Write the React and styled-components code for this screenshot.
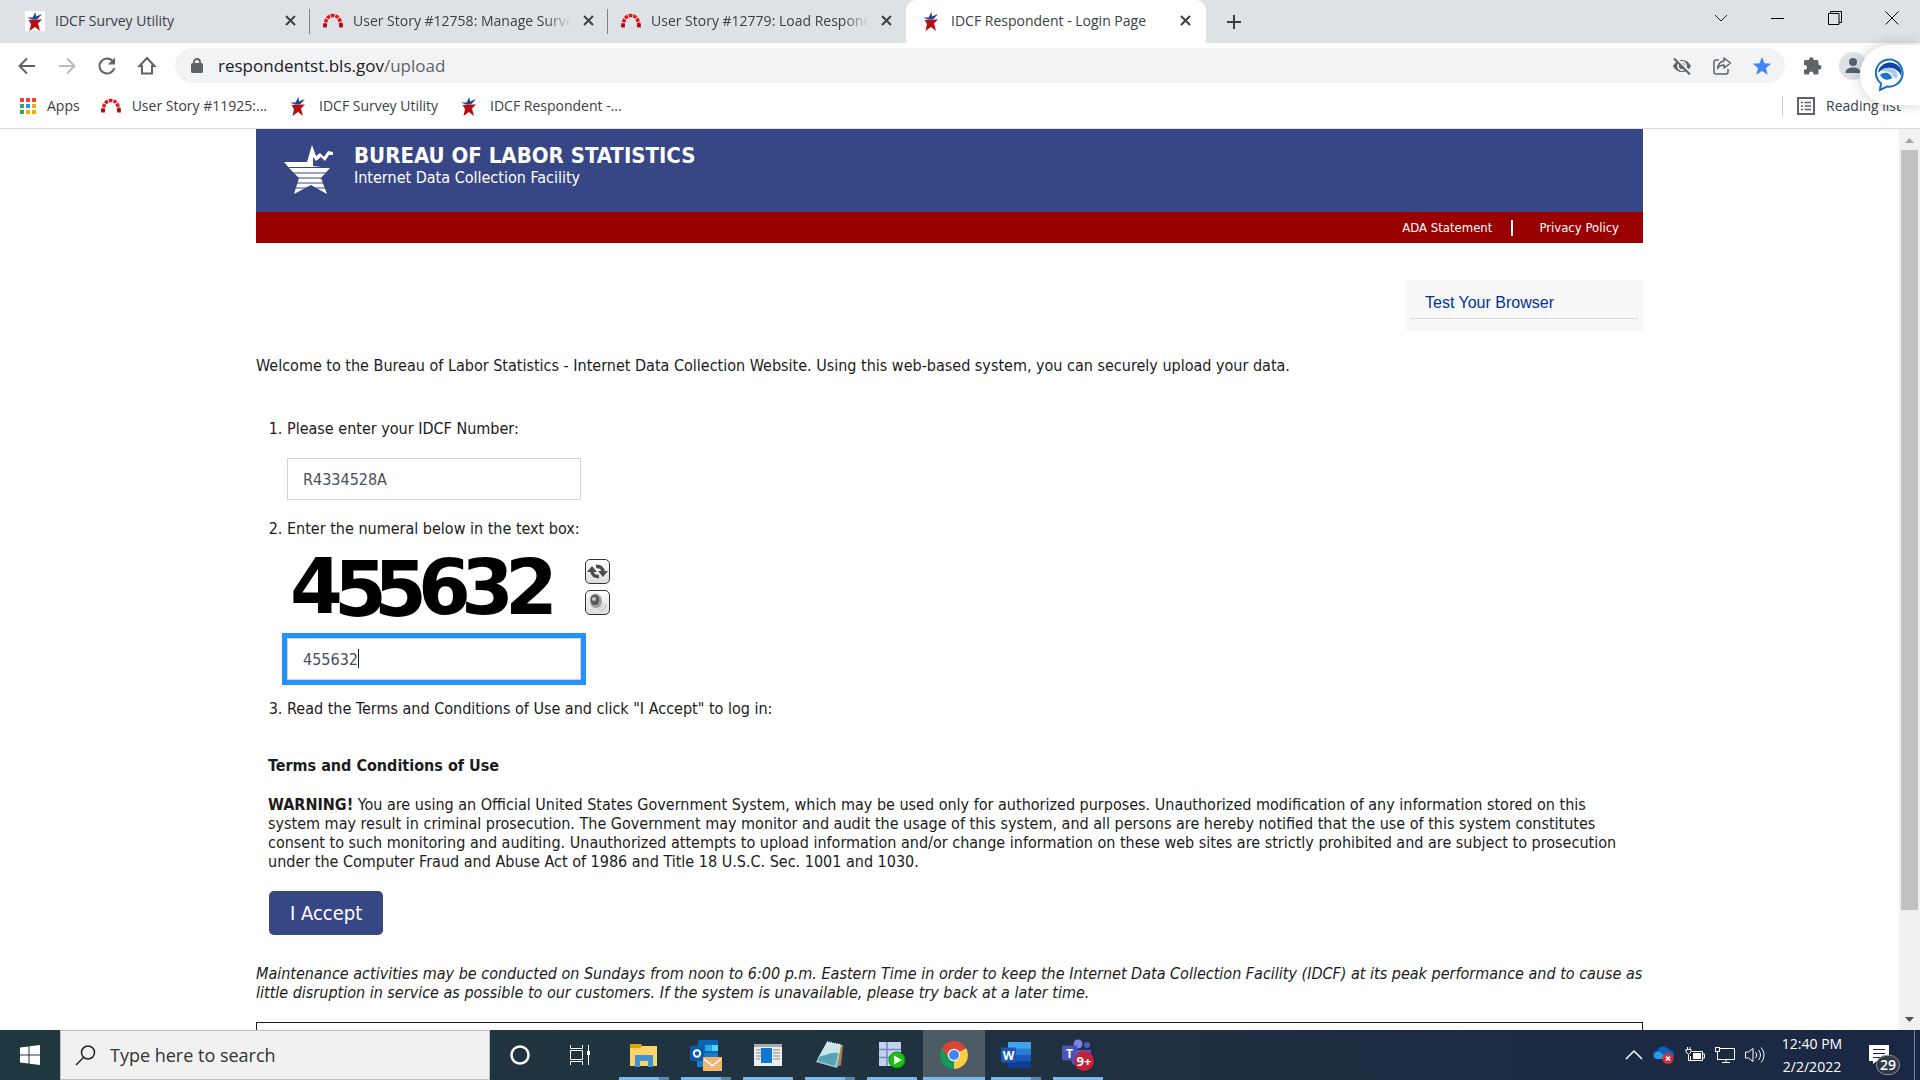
import React from 'react';
import styled, { createGlobalStyle } from 'styled-components';

const uiFont = `'Open Sans', 'Noto Sans', sans-serif`;
const pageFont = `'DejaVu Sans Condensed', 'Noto Sans', sans-serif`;

const tabs = [
  { title: 'IDCF Survey Utility', icon: 'star' },
  { title: 'User Story #12758: Manage Survey Data', icon: 'arch' },
  { title: 'User Story #12779: Load Respondent File', icon: 'arch' },
  { title: 'IDCF Respondent - Login Page', icon: 'star', active: true },
];

const bookmarks = [
  { title: 'Apps', icon: 'apps' },
  { title: 'User Story #11925:...', icon: 'arch' },
  { title: 'IDCF Survey Utility', icon: 'star' },
  { title: 'IDCF Respondent -...', icon: 'star' },
];

export default function App() {
  return (
    <Screen>
      <GlobalStyle />
      <Browser>
        <TabStrip />
        <Toolbar />
        <BookmarkBar />
        <Viewport>
          <LoginPage />
          <ScrollBar />
        </Viewport>
        <Assistant aria-label='Assistant'>
          <AssistantIcon />
        </Assistant>
      </Browser>
      <Taskbar />
    </Screen>
  );
}

/* ---------- browser chrome ---------- */

const TabStrip = () => (
  <Strip>
    {tabs.map((tab, i) => (
      <Tab key={tab.title} $active={tab.active} $divider={i < 2}>
        <SiteIcon name={tab.icon} />
        <TabTitle $fade={tab.icon === 'arch'}>{tab.title}</TabTitle>
        <TabClose aria-label='Close tab'>
          <svg width='11' height='11' viewBox='0 0 11 11' stroke='#3c4043' strokeWidth='2'>
            <path d='M1 1l9 9M10 1l-9 9' />
          </svg>
        </TabClose>
      </Tab>
    ))}
    <NewTab aria-label='New tab'>
      <svg width='16' height='16' viewBox='0 0 16 16' stroke='#3c4043' strokeWidth='2'>
        <path d='M8 1v14M1 8h14' />
      </svg>
    </NewTab>
    <WindowButtons>
      <WindowButton aria-label='Search tabs'>
        <svg width='14' height='14' viewBox='0 0 14 14' fill='none' stroke='#222'>
          <path d='M1 4l6 6 6-6' />
        </svg>
      </WindowButton>
      <WindowButton aria-label='Minimize'>
        <svg width='13' height='13' viewBox='0 0 13 13' stroke='#000'>
          <path d='M0 6.500h13' />
        </svg>
      </WindowButton>
      <WindowButton aria-label='Restore'>
        <svg width='14' height='14' viewBox='0 0 14 14' fill='none' stroke='#000'>
          <path d='M.5 2.500h10.500v11H.5zM2.500 2.500v-2h11v11H11' />
        </svg>
      </WindowButton>
      <WindowButton aria-label='Close'>
        <svg width='14' height='14' viewBox='0 0 14 14' stroke='#000'>
          <path d='M.5.5l13 13M13.500.5l-13 13' />
        </svg>
      </WindowButton>
    </WindowButtons>
  </Strip>
);

const Toolbar = () => (
  <Bar>
    <NavButton aria-label='Back'>
      <svg width='20' height='20' viewBox='0 0 20 20' fill='none' stroke='#5f6368' strokeWidth='2'>
        <path d='M18 10H3M10 2.500L2.500 10l7.500 7.500' />
      </svg>
    </NavButton>
    <NavButton aria-label='Forward'>
      <svg width='20' height='20' viewBox='0 0 20 20' fill='none' stroke='#babcbe' strokeWidth='2'>
        <path d='M2 10h15M10 2.500l7.500 7.500-7.500 7.500' />
      </svg>
    </NavButton>
    <NavButton aria-label='Reload'>
      <svg width='20' height='20' viewBox='0 0 20 20' fill='none' stroke='#5f6368' strokeWidth='2'>
        <path d='M16 5.500A7.500 7.500 0 1 0 17.300 12' />
        <path d='M18 1.500v7h-7z' fill='#5f6368' stroke='none' />
      </svg>
    </NavButton>
    <NavButton aria-label='Home'>
      <svg width='20' height='20' viewBox='0 0 20 20' fill='none' stroke='#5f6368' strokeWidth='2'>
        <path d='M2.500 10L10 2l7.500 8H15v7.500H5V10z' />
      </svg>
    </NavButton>
    <Omnibox>
      <svg width='12' height='16' viewBox='0 0 12 16'>
        <rect x='0' y='5' width='12' height='10' rx='1.500' fill='#5f6368' />
        <path d='M3 6V4a3 3 0 0 1 6 0v2' fill='none' stroke='#5f6368' strokeWidth='1.800' />
      </svg>
      <Url>
        respondentst.bls.gov<span>/upload</span>
      </Url>
      <OmniIcons>
        <svg width='20' height='20' viewBox='0 0 20 20'>
          <path d='M1 10c2-4 5.500-6 9-6s7 2 9 6c-2 4-5.500 6-9 6s-7-2-9-6z' fill='#5f6368' />
          <circle cx='10' cy='10' r='4' fill='#5f6368' stroke='#f1f3f4' strokeWidth='1.800' />
          <path d='M3 1l16 16' stroke='#f1f3f4' strokeWidth='2' />
          <path d='M2 2.500l16 16' stroke='#5f6368' strokeWidth='2' />
        </svg>
        <svg width='20' height='20' viewBox='0 0 20 20' fill='none' stroke='#5f6368' strokeWidth='1.500'>
          <path d='M7 4H4a2 2 0 0 0-2 2v10a2 2 0 0 0 2 2h10a2 2 0 0 0 2-2v-3' />
          <path d='M12 2l6.500 5-6.500 5V9c-3.500 0-5 1-6.500 3.500C6 8.500 8 5.500 12 5z' strokeLinejoin='round' />
        </svg>
        <svg width='20' height='20' viewBox='0 0 20 20'>
          <path d='M10 1l2.500 6.300 6.700.5-5.200 4.300 1.700 6.600L10 15.100l-5.700 3.600L6 12.100.8 7.800l6.700-.5z' fill='#4285f4' />
        </svg>
      </OmniIcons>
    </Omnibox>
    <ExtensionIcons>
      <svg width='20' height='20' viewBox='0 0 20 20' fill='#5f6368'>
        <path d='M7 3.500a2.300 2.300 0 0 1 4.600 0V4H15a1.500 1.500 0 0 1 1.500 1.500V9h.7a2.300 2.300 0 0 1 0 4.600h-.7V17a1.500 1.500 0 0 1-1.500 1.500h-3.500v-.7a2.200 2.200 0 0 0-4.400 0v.7H3.500A1.500 1.500 0 0 1 2 17v-3.300h.7a2.300 2.300 0 0 0 0-4.600H2V5.500A1.500 1.500 0 0 1 3.500 4H7z' />
      </svg>
      <svg width='28' height='28' viewBox='0 0 28 28'>
        <circle cx='14' cy='14' r='14' fill='#dee1e6' />
        <circle cx='14' cy='10' r='4' fill='#566070' />
        <path d='M6.500 21c0-4 3.500-5.500 7.500-5.500s7.500 1.500 7.500 5.500z' fill='#566070' />
      </svg>
    </ExtensionIcons>
  </Bar>
);

const BookmarkBar = () => (
  <Bookmarks>
    {bookmarks.map((item) => (
      <Bookmark href='#' key={item.title}>
        <SiteIcon name={item.icon} />
        {item.title}
      </Bookmark>
    ))}
    <ReadingList>
      <svg width='18' height='18' viewBox='0 0 18 18' stroke='#5f6368' fill='none'>
        <rect x='1' y='1' width='16' height='16' strokeWidth='2' />
        <path d='M4 5.500h2M4 9h2M4 12.500h2M7.500 5.500H14M7.500 9H14M7.500 12.500H14' strokeWidth='1.500' />
      </svg>
      Reading list
    </ReadingList>
  </Bookmarks>
);

const ScrollBar = () => (
  <Scroll>
    <svg width='9' height='5' viewBox='0 0 9 5'>
      <path d='M0 5l4.500-5L9 5z' fill='#a3a3a3' />
    </svg>
    <Thumb />
    <svg width='9' height='5' viewBox='0 0 9 5'>
      <path d='M0 0l4.500 5L9 0z' fill='#505050' />
    </svg>
  </Scroll>
);

/* ---------- page ---------- */

const LoginPage = () => (
  <Page>
    <Header>
      <AgencyLogo />
      <div>
        <h1>BUREAU OF LABOR STATISTICS</h1>
        <p>Internet Data Collection Facility</p>
      </div>
    </Header>
    <LinkBar>
      <a href='#'>ADA Statement</a>
      <i />
      <a href='#'>Privacy Policy</a>
    </LinkBar>
    <SideBox>
      <a href='#'>Test Your Browser</a>
    </SideBox>
    <Welcome>
      Welcome to the Bureau of Labor Statistics - Internet Data Collection Website. Using this
      web-based system, you can securely upload your data.
    </Welcome>
    <Steps>
      <li>
        <label htmlFor='idcf'>Please enter your IDCF Number:</label>
        <Field>
          <TextBox id='idcf' defaultValue='R4334528A' />
        </Field>
      </li>
      <li>
        <label htmlFor='numeral'>Enter the numeral below in the text box:</label>
        <CaptchaRow>
          <Captcha />
          <CaptchaButtons>
            <CaptchaButton aria-label='New numeral'>
              <svg width='21' height='19' viewBox='0 0 21 19' fill='none' stroke='#4d4d4d' strokeWidth='3.500'>
                <path d='M5 9c0 4 3 6 7 5.500M9 4.500c4-.5 7 1.500 7 5.500' />
                <path d='M0 10l5-6 5 6zM11 9h10l-5 6z' fill='#4d4d4d' stroke='none' />
              </svg>
            </CaptchaButton>
            <CaptchaButton aria-label='Play audio'>
              <svg width='21' height='21' viewBox='0 0 21 21' fill='none'>
                <ellipse cx='9' cy='9' rx='6' ry='7' fill='#999' />
                <ellipse cx='8' cy='8' rx='5' ry='6' fill='#5c5c5c' stroke='#bbb' />
                <circle cx='7' cy='7' r='2' fill='#ccc' />
                <path d='M12 17c2-1 4-3 4.500-5.500M14 19c3-1 4.500-3.500 5-6.500' stroke='#b5b5b5' />
              </svg>
            </CaptchaButton>
          </CaptchaButtons>
        </CaptchaRow>
        <Field>
          <TextBox id='numeral' defaultValue='455632' $active />
          <Caret />
        </Field>
      </li>
      <li>Read the Terms and Conditions of Use and click "I Accept" to log in:</li>
    </Steps>
    <Terms>
      <h2>Terms and Conditions of Use</h2>
      <p>
        <b>WARNING!</b> You are using an Official United States Government System, which may be
        used only for authorized purposes. Unauthorized modification of any information stored on
        this system may result in criminal prosecution. The Government may monitor and audit the
        usage of this system, and all persons are hereby notified that the use of this system
        constitutes consent to such monitoring and auditing. Unauthorized attempts to upload
        information and/or change information on these web sites are strictly prohibited and are
        subject to prosecution under the Computer Fraud and Abuse Act of 1986 and Title 18 U.S.C.
        Sec. 1001 and 1030.
      </p>
      <AcceptButton>I Accept</AcceptButton>
    </Terms>
    <Maintenance>
      Maintenance activities may be conducted on Sundays from noon to 6:00 p.m. Eastern Time in
      order to keep the Internet Data Collection Facility (IDCF) at its peak performance and to
      cause as little disruption in service as possible to our customers. If the system is
      unavailable, please try back at a later time.
    </Maintenance>
    <NoticeBox />
  </Page>
);

const Captcha = () => (
  <svg width='294' height='63' viewBox='0 0 294 63' role='img' aria-label='Numeral'>
    <text
      x='3 47 87 131 174 218'
      y='57 60 60 58 58 58'
      fontFamily="'DejaVu Sans', sans-serif"
      fontWeight='700'
      fontSize='76'
    >
      455632
    </text>
  </svg>
);

/* ---------- taskbar ---------- */

const Taskbar = () => (
  <Task>
    <StartButton aria-label='Start'>
      <svg width='20' height='20' viewBox='0 0 20 20' fill='#fff'>
        <path d='M0 2.500L8.500 1.500v8H0zM9.500 1.300L20 0v9.500H9.500zM0 10.500h8.500v8L0 17.500zM9.500 10.500H20V20L9.500 18.700z' />
      </svg>
    </StartButton>
    <SearchBox>
      <svg width='21' height='21' viewBox='0 0 21 21' fill='none' stroke='#222' strokeWidth='1.500'>
        <circle cx='13' cy='7.500' r='6.500' />
        <path d='M8.500 12.500L1 20' />
      </svg>
      <input placeholder='Type here to search' aria-label='Search' />
    </SearchBox>
    <ShellButton aria-label='Cortana'>
      <svg width='20' height='20' viewBox='0 0 20 20'>
        <circle cx='10' cy='10' r='8.500' fill='none' stroke='#fff' strokeWidth='2.500' />
      </svg>
    </ShellButton>
    <ShellButton aria-label='Task view'>
      <svg width='20' height='20' viewBox='0 0 20 20' fill='none' stroke='#fff'>
        <path d='M.5 5.500h12v9H.5zM.5 0v3.500h12V0M.5 20v-3.500h12V20M18.500 0v20' />
        <rect x='17' y='6' width='3' height='4' fill='#fff' stroke='none' />
      </svg>
    </ShellButton>
    <TaskApps>
      <TaskApp aria-label='File Explorer' $stacked>
        <ExplorerIcon />
      </TaskApp>
      <TaskApp aria-label='Outlook' $stacked>
        <OutlookIcon />
      </TaskApp>
      <TaskApp aria-label='Viewer'>
        <WindowIcon />
      </TaskApp>
      <TaskApp aria-label='Notepad' $stacked>
        <NotepadIcon />
      </TaskApp>
      <TaskApp aria-label='Server Manager'>
        <ServerIcon />
      </TaskApp>
      <TaskApp aria-label='Chrome' $active>
        <ChromeIcon />
      </TaskApp>
      <TaskApp aria-label='Word' $stacked>
        <WordIcon />
      </TaskApp>
      <TaskApp aria-label='Teams'>
        <TeamsIcon />
      </TaskApp>
    </TaskApps>
    <Tray>
      <svg width='18' height='12' viewBox='0 0 18 12' fill='none' stroke='#fff' strokeWidth='1.500'>
        <path d='M1 10l8-8 8 8' />
      </svg>
      <svg width='22' height='20' viewBox='0 0 22 20'>
        <path d='M4 14a4 4 0 0 1 0-8 6.500 6.500 0 0 1 12-1 4.500 4.500 0 0 1 1 9z' fill='#0a64b8' />
        <path d='M1 10c1-3 4-4 6-3l9 7H4a4 4 0 0 1-3-4z' fill='#2a9be8' />
        <circle cx='15' cy='13.500' r='5.500' fill='#d7303a' />
        <path d='M13 11.500l4 4M17 11.500l-4 4' stroke='#fff' strokeWidth='1.500' />
      </svg>
      <svg width='20' height='16' viewBox='0 0 20 16' fill='none' stroke='#fff'>
        <path d='M6.500 4.500h11v9h-12V9M18 7h1.500v4H18' />
        <rect x='8' y='6' width='8' height='6' fill='#fff' stroke='none' />
        <path d='M1 2.500h5V5L3.500 7.500 1 5zM2.500 0v2M5 0v2M3.500 7v6.500H7' />
      </svg>
      <svg width='20' height='18' viewBox='0 0 20 18' fill='none' stroke='#fff'>
        <path d='M5 2.500h14.500v11H2.500V6M7 16.500h8M11 13.500v3' />
        <rect x='.5' y='1.500' width='4' height='4' />
      </svg>
      <svg width='20' height='18' viewBox='0 0 20 18' fill='none' stroke='#fff'>
        <path d='M.5 6h3L8 2.500v13L3.500 12h-3zM10.500 6c1.500 2 1.500 4 0 6M13.500 4c2.500 3 2.500 7 0 10M16 1.500c4 4.500 4 10.500 0 15' />
      </svg>
    </Tray>
    <Clock>
      <span>12:40 PM</span>
      <span>2/2/2022</span>
    </Clock>
    <Notifications aria-label='Notifications'>
      <svg width='20' height='20' viewBox='0 0 20 20'>
        <path d='M0 0h20v16H8l-4 3v-3H0z' fill='#fff' />
        <path d='M4 4.500h12M4 8.500h12M4 12.500h8' stroke='#1b2a42' />
      </svg>
      <Badge>29</Badge>
    </Notifications>
    <ShowDesktop />
  </Task>
);

/* ---------- icons ---------- */

const SiteIcon = ({ name }) => {
  if (name === 'apps') {
    const colors = ['#f44336', '#f44336', '#f44336', '#34a853', '#2196f3', '#fbab00', '#34a853', '#fbab00', '#fbab00'];
    return (
      <svg width='16' height='16' viewBox='0 0 16 16'>
        {colors.map((c, i) => (
          <rect key={i} x={(i % 3) * 6} y={Math.floor(i / 3) * 6} width='4' height='4' fill={c} />
        ))}
      </svg>
    );
  }
  if (name === 'arch') {
    return (
      <svg width='20' height='20' viewBox='0 0 20 20' fill='none' strokeWidth='3.500'>
        <path d='M2 16C2.500 8 5 4.500 10 4.500S17.500 8 18 16' stroke='#e0161b' strokeDasharray='3.500 1' />
        <path d='M2 16.500v-4M18 16.500v-4' stroke='#b30a0e' />
      </svg>
    );
  }
  return (
    <svg width='20' height='20' viewBox='0 0 20 20'>
      <rect width='20' height='20' fill='#fff' />
      <path d='M2 6.500h5.500L10.500 1l.5 4.500L17 3l-4 4.500-2 1H7z' fill='#1546a0' />
      <path d='M3.500 9L11 8.500h6l-4 4L15 20l-5-4-5.500 4 1.500-7z' fill='#b30f12' />
    </svg>
  );
};

const AgencyLogo = () => (
  <svg width='50' height='52' viewBox='3 3 50 52'>
    <path d='M4 22h23l5-17 4 11 4-3 4 4 4-6 5 1v3l-4 0-4 6-4-4-5 4-3-4v9l17 2-9 10 6 16-16-9-17 9 5-16-9-9z' fill='#fff' />
    <path d='M9 27.500h44M12 33h36M15 38h32M15 43h32M14 48h34' stroke='#374785' />
  </svg>
);

const AssistantIcon = () => (
  <svg width='32' height='34' viewBox='0 0 32 34'>
    <path d='M16 1.500a13.500 13.500 0 1 1-4 27L5 32l1-6.500A13.500 13.500 0 0 1 16 1.500z' fill='#fff' stroke='#1670c4' strokeWidth='2' />
    <path d='M4 11C8 4 16 3 21 6c5 3 6 7 5 12-2-6-8-9-14-8-3 0-6 2-9 5z' fill='#0d47a1' />
    <path d='M5 13c4-4 12-4 16 0 2 2 2 5 1 7-3 1-4-2-5-4-3-3-8-3-12-3z' fill='#a9cdf0' />
    <path d='M5 17c4-4 11-2 12 3-4 3-9 2-12-3z' fill='#1976c9' />
  </svg>
);

const ExplorerIcon = () => (
  <svg width='28' height='24' viewBox='0 0 28 24'>
    <path d='M0 1h11l2 3-3 2H0z' fill='#e0a100' />
    <path d='M0 5h10l2-2h15v20H0z' fill='#fdd465' />
    <path d='M5 24V12h18v12h-5v-6h-8v6z' fill='#3d94d9' />
  </svg>
);

const OutlookIcon = () => (
  <svg width='32' height='32' viewBox='0 0 32 32'>
    <path d='M8 1h20v17H8z' fill='#0a64b0' />
    <path d='M15 6h7v6h-7z' fill='#28a8ea' />
    <path d='M22 6h6v6h-6z' fill='#50d9ff' />
    <path d='M7 14h21v14H7z' fill='#127fd0' />
    <rect x='0' y='7' width='14' height='15' rx='1' fill='#0a5dae' />
    <circle cx='7' cy='14.500' r='3.200' fill='none' stroke='#fff' strokeWidth='2' />
    <path d='M13 18h19v14H13z' fill='#eeb573' />
    <path d='M14 20l8.500 6.500L31 20' fill='none' stroke='#fff' strokeWidth='1.500' />
  </svg>
);

const WindowIcon = () => (
  <svg width='28' height='22' viewBox='0 0 28 22'>
    <path d='M0 0h28v22H0z' fill='#eee' />
    <path d='M0 0h28v3H0z' fill='#aaa' />
    <path d='M2 6h5M2 9h5M2 12h5M2 15h4M19 6h7M19 9h7M19 12h7M19 15h7' stroke='#888' />
    <path d='M7 4h11v15H7z' fill='#0b78d4' />
  </svg>
);

const NotepadIcon = () => (
  <svg width='28' height='28' viewBox='0 0 28 28'>
    <path d='M22 3l5 1-2 20-4 2z' fill='#a8824f' />
    <path d='M11 1l14 3-4 23L0 21z' fill='#9ccdd6' />
    <path d='M11 1l14 3-2 9C15 13 10 18 2 17z' fill='#c9e6ea' />
    <path d='M4 15c6 0 10-4 18-3l-3 13-17-5z' fill='#58a3b3' />
    <path d='M11 1l14 3' stroke='#e8e8e8' strokeWidth='2' strokeDasharray='1 1' />
  </svg>
);

const ServerIcon = () => (
  <svg width='28' height='28' viewBox='0 0 28 28'>
    <path d='M1 1h22v24H1z' fill='#c3d3ee' />
    <path d='M1 8.500h22M1 16.500h22M9 1v24' stroke='#6f8bbd' strokeWidth='1.500' />
    <circle cx='19' cy='19' r='8' fill='#1bc40c' stroke='#0c8a06' />
    <path d='M16 14.500l8 4.500-8 4.500z' fill='#fff' />
  </svg>
);

const ChromeIcon = () => (
  <svg width='28' height='28' viewBox='0 0 28 28'>
    <path d='M14 14L1.900 7A14 14 0 0 1 26.100 7z' fill='#db4437' />
    <path d='M14 14L26.100 7A14 14 0 0 1 14 28z' fill='#ffcd40' />
    <path d='M14 14v14A14 14 0 0 1 1.900 7z' fill='#0f9d58' />
    <path d='M14 7.500h12.400L26 7H14zM8.400 17.300L1.900 7l1-1.500 8 8z' fill='#db4437' />
    <path d='M14 28l6-10.500-3-2z' fill='#ffcd40' />
    <circle cx='14' cy='14' r='6.300' fill='#f1f1f1' />
    <circle cx='14' cy='14' r='5' fill='#4285f4' />
  </svg>
);

const WordIcon = () => (
  <svg width='30' height='28' viewBox='0 0 30 28'>
    <path d='M7 1h23v7H7z' fill='#41a5ee' />
    <path d='M7 7.500h23V14H7z' fill='#2b7cd3' />
    <path d='M7 14h23v6.500H7z' fill='#185abd' />
    <path d='M7 20.500h23V27H7z' fill='#103f91' />
    <rect x='0' y='6.500' width='15' height='15' rx='1' fill='#1b56b5' />
    <text x='7.500' y='18.500' textAnchor='middle' fill='#fff' fontFamily='Open Sans, sans-serif' fontWeight='700' fontSize='12'>W</text>
  </svg>
);

const TeamsIcon = () => (
  <svg width='32' height='32' viewBox='0 0 32 32'>
    <circle cx='16' cy='5' r='4.500' fill='#7b83eb' />
    <circle cx='25' cy='6' r='3' fill='#5059c9' />
    <path d='M9 11h20v8a6 6 0 0 1-8 6l-4 2c-5 0-8-3-8-8z' fill='#5059c9' />
    <rect x='0' y='6.500' width='15' height='15' rx='1' fill='#4b53bc' />
    <text x='7.500' y='18.500' textAnchor='middle' fill='#fff' fontFamily='Open Sans, sans-serif' fontWeight='700' fontSize='12'>T</text>
    <circle cx='22' cy='22' r='10' fill='#c4203a' />
    <text x='22' y='27' textAnchor='middle' fill='#fff' fontFamily='Open Sans, sans-serif' fontWeight='700' fontSize='13'>9+</text>
  </svg>
);

/* ---------- styles ---------- */

const GlobalStyle = createGlobalStyle`
  * {
    box-sizing: border-box;
  }
  body {
    margin: 0;
    overflow: hidden;
  }
  h1, h2, p, ol {
    margin: 0;
    padding: 0;
  }
  button {
    border: 0;
    padding: 0;
    background: none;
    font: inherit;
  }
  svg {
    display: block;
    flex: none;
  }
  a {
    text-decoration: none;
  }
`;

const Screen = styled.div`
  display: flex;
  flex-direction: column;
  height: 100vh;
  background: #fff;
`;

const Browser = styled.div`
  position: relative;
  flex: 1;
  min-height: 0;
  display: flex;
  flex-direction: column;
  font-family: ${uiFont};
  font-size: 14px;
  color: #3c4043;
`;

const Strip = styled.div`
  display: flex;
  align-items: stretch;
  height: 43px;
  flex: none;
  padding-left: 12px;
  background: #dee1e6;
`;

const Tab = styled.div`
  position: relative;
  display: flex;
  align-items: center;
  gap: 10px;
  width: ${(p) => (p.$active ? '300px' : '298px')};
  padding: ${(p) => (p.$active ? '0 14px 2px 15px' : '0 13px 2px 13px')};
  background: ${(p) => (p.$active ? '#fff' : 'transparent')};
  border-radius: 10px 10px 0 0;

  /* thin divider on the right edge of inactive tabs */
  &::after {
    content: '';
    display: ${(p) => (p.$divider ? 'block' : 'none')};
    position: absolute;
    right: 0;
    top: 9px;
    width: 1px;
    height: 25px;
    background: #808387;
  }
`;

const TabTitle = styled.span`
  flex: 1;
  overflow: hidden;
  white-space: nowrap;
  mask-image: ${(p) => (p.$fade ? 'linear-gradient(to right, #000 88%, transparent)' : 'none')};
`;

const TabClose = styled.button`
  width: 14px;
  display: flex;
  justify-content: center;
`;

const NewTab = styled.button`
  width: 56px;
  display: flex;
  align-items: center;
  justify-content: center;
`;

const WindowButtons = styled.div`
  display: flex;
  margin-left: auto;
`;

const WindowButton = styled.button`
  width: 57px;
  height: 36px;
  display: flex;
  align-items: center;
  justify-content: center;
`;

const Bar = styled.div`
  display: flex;
  align-items: center;
  height: 45px;
  flex: none;
  padding: 0 53px 0 7px;
`;

const NavButton = styled.button`
  width: 40px;
  height: 40px;
  display: flex;
  align-items: center;
  justify-content: center;
`;

const Omnibox = styled.div`
  flex: 1;
  display: flex;
  align-items: center;
  height: 35px;
  margin-left: 8px;
  padding: 0 13px 0 16px;
  background: #f1f3f4;
  border-radius: 18px;
`;

const Url = styled.div`
  flex: 1;
  margin-left: 15px;
  font-size: 17px;
  color: #202124;

  span {
    color: #5f6368;
  }
`;

const OmniIcons = styled.div`
  display: flex;
  gap: 20px;
`;

const ExtensionIcons = styled.div`
  display: flex;
  align-items: center;
  gap: 17px;
  margin-left: 17px;
`;

const Bookmarks = styled.div`
  display: flex;
  align-items: center;
  gap: 21px;
  height: 41px;
  flex: none;
  padding: 0 19px 5px 20px;
  border-bottom: 1px solid #dadce0;
`;

const Bookmark = styled.a`
  display: flex;
  align-items: center;
  gap: 11px;
  color: #3c4043;
`;

const ReadingList = styled.button`
  display: flex;
  align-items: center;
  gap: 11px;
  height: 20px;
  margin-left: auto;
  padding-left: 14px;
  border-left: 1px solid #c9cbcf;
  color: #3c4043;
`;

const Assistant = styled.button`
  position: absolute;
  top: 45px;
  right: 0;
  width: 60px;
  height: 60px;
  padding-left: 15px;
  background: #fff;
  border-radius: 30px 0 0 30px;
  box-shadow: 0 0 14px rgba(0, 0, 0, 0.2);
`;

const Viewport = styled.div`
  flex: 1;
  min-height: 0;
  display: flex;
`;

const Scroll = styled.div`
  width: 21px;
  display: flex;
  flex-direction: column;
  align-items: center;
  padding: 9px 0 8px;
  background: #f1f1f1;

  & svg:last-child {
    margin-top: auto;
  }
`;

const Thumb = styled.div`
  width: 17px;
  margin-top: 7px;
  flex: 0 1 760px;
  background: #c1c1c1;
`;

const Page = styled.main`
  flex: 1;
  display: flex;
  flex-direction: column;
  overflow: hidden;
  padding: 0 256px;
  font-family: ${pageFont};
  font-size: 16px;
  line-height: 20px;
  color: #1b1b1b;
`;

const Header = styled.header`
  display: flex;
  gap: 21px;
  height: 83px;
  flex: none;
  padding: 14px 27px;
  background: #374785;
  color: #fff;

  h1 {
    font-size: 22px;
    line-height: 26px;
  }
  p {
    font-size: 16px;
    line-height: 18px;
  }
`;

const LinkBar = styled.nav`
  display: flex;
  align-items: center;
  justify-content: flex-end;
  height: 31px;
  flex: none;
  padding-right: 24px;
  background: #990000;
  font-size: 13px;

  a {
    color: #fff;
  }
  i {
    width: 2px;
    height: 16px;
    margin: 0 26px 0 19px;
    background: #fff;
  }
`;

const SideBox = styled.aside`
  align-self: flex-end;
  width: 237px;
  height: 51px;
  flex: none;
  margin-top: 37px;
  padding: 6px;
  background: #f8f8f8;

  a {
    display: block;
    padding: 2px 13px 0;
    border-bottom: 1px dotted #bbb;
    font-family: 'Liberation Sans', Arial, sans-serif;
    font-size: 16px;
    line-height: 30px;
    color: #003399;
  }
`;

const Welcome = styled.p`
  margin-top: 25px;
`;

const Steps = styled.ol`
  margin-top: 43px;
  padding-left: 31px;

  li + li {
    margin-top: 19px;
  }
  label {
    display: block;
  }
`;

const Field = styled.div`
  position: relative;
  margin-top: 19px;
`;

const TextBox = styled.input`
  display: block;
  width: 294px;
  height: 42px;
  padding: 1px 15px 0;
  border: 1px solid #ced4da;
  outline: ${(p) => (p.$active ? '5px solid #2491ff' : 'none')};
  font-family: ${pageFont};
  font-size: 16px;
  color: #495057;
`;

/* text cursor over the active field */
const Caret = styled.span`
  position: absolute;
  left: 71px;
  top: 11px;
  width: 1px;
  height: 19px;
  background: #1b1b1b;
`;

const CaptchaRow = styled.div`
  display: flex;
  gap: 4px;
  margin-top: 17px;
`;

const CaptchaButtons = styled.div`
  display: flex;
  flex-direction: column;
  gap: 6px;
  padding-top: 3px;
`;

const CaptchaButton = styled.button`
  width: 25px;
  height: 25px;
  display: flex;
  align-items: center;
  justify-content: center;
  background: linear-gradient(#fff, #ddd);
  border: 1px solid #333;
  border-radius: 5px;
`;

const Terms = styled.section`
  margin-top: 37px;
  padding: 0 12px;

  h2 {
    font-size: 16px;
    line-height: 20px;
  }
  p {
    margin-top: 19px;
    line-height: 19px;
  }
`;

const AcceptButton = styled.button`
  height: 44px;
  margin: 20px 0 0 1px;
  padding: 0 21px;
  background: #374785;
  border-radius: 5px;
  color: #fff;
  font-size: 20px;
`;

const Maintenance = styled.p`
  margin-top: 29px;
  line-height: 19px;
  font-style: italic;
`;

const NoticeBox = styled.div`
  flex: none;
  height: 120px;
  margin-top: 20px;
  border: 1px solid #1b1b1b;
`;

const Task = styled.footer`
  display: flex;
  align-items: stretch;
  height: 50px;
  flex: none;
  background: linear-gradient(to right, #203840, #1f3040 60%, #1a2744);
  color: #fff;
  font-family: ${uiFont};
`;

const StartButton = styled.button`
  width: 60px;
  display: flex;
  align-items: center;
  justify-content: center;
`;

const SearchBox = styled.div`
  width: 430px;
  display: flex;
  align-items: center;
  gap: 12px;
  padding: 0 14px;
  background: #f1f1f1;
  border: 1px solid #bfbfbf;

  input {
    flex: 1;
    border: 0;
    background: none;
    font-family: ${uiFont};
    font-size: 18px;
  }
  input::placeholder {
    color: #333;
  }
`;

const ShellButton = styled.button`
  width: 60px;
  display: flex;
  align-items: center;
  justify-content: center;
`;

const TaskApps = styled.div`
  display: flex;
  margin-left: 3px;
`;

const TaskApp = styled.button`
  width: 62px;
  display: flex;
  align-items: center;
  justify-content: center;
  background: ${(p) => (p.$active ? '#4d5b65' : 'none')};
  position: relative;

  &::after {
    content: '';
    position: absolute;
    bottom: 0;
    left: ${(p) => (p.$active ? '0' : '6px')};
    right: ${(p) => (p.$active ? '0' : '6px')};
    height: 3px;
    background: ${(p) => (p.$stacked ? 'linear-gradient(to right, #76b9ed 80%, #5a86ad 80%)' : '#76b9ed')};
  }
`;

const Tray = styled.div`
  display: flex;
  align-items: center;
  gap: 10px;
  margin-left: auto;
`;

const Clock = styled.div`
  display: flex;
  flex-direction: column;
  align-items: center;
  justify-content: center;
  width: 94px;
  font-size: 14px;
  line-height: 23px;
`;

const Notifications = styled.button`
  position: relative;
  width: 55px;
  padding-left: 10px;
`;

const Badge = styled.span`
  position: absolute;
  left: 17px;
  bottom: 5px;
  width: 24px;
  height: 20px;
  border: 1px solid #8a909a;
  border-radius: 10px;
  background: #333a46;
  color: #fff;
  font-size: 14px;
  font-weight: 600;
  line-height: 18px;
  text-align: center;
`;

const ShowDesktop = styled.div`
  width: 6px;
  border-left: 1px solid #7b8494;
`;
